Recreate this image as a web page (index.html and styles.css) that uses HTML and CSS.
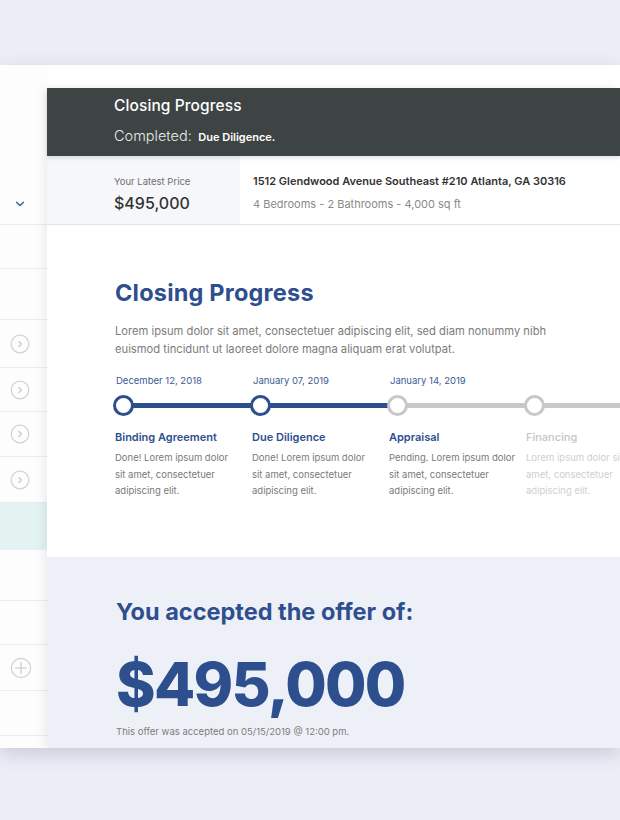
FILE: index.html
```html
<!DOCTYPE html>
<html>
<head>
<meta charset="utf-8">
<link rel="stylesheet" href="styles.css">
</head>
<body>
<div class="page">
  <div class="panel">
    <aside class="sidebar">
      <div class="srow srow-top">
        <svg class="chev" width="10" height="6" viewBox="0 0 10 6"><path d="M1.5 1.2 L5 4.6 L8.5 1.2" fill="none" stroke="#3f5d99" stroke-width="1.4" stroke-linecap="round" stroke-linejoin="round"/></svg>
      </div>
      <div class="srow h44"></div>
      <div class="srow h51"></div>
      <div class="srow h48"><span class="circ"><svg width="20" height="20" viewBox="0 0 20 20"><circle cx="10" cy="10" r="8.8" fill="none" stroke="#d2d2d2" stroke-width="1.2"/><path d="M8.9 7.4 L11.4 10 L8.9 12.6" fill="none" stroke="#c4c4c4" stroke-width="1.2" stroke-linecap="round" stroke-linejoin="round"/></svg></span></div>
      <div class="srow h44"><span class="circ"><svg width="20" height="20" viewBox="0 0 20 20"><circle cx="10" cy="10" r="8.8" fill="none" stroke="#d2d2d2" stroke-width="1.2"/><path d="M8.9 7.4 L11.4 10 L8.9 12.6" fill="none" stroke="#c4c4c4" stroke-width="1.2" stroke-linecap="round" stroke-linejoin="round"/></svg></span></div>
      <div class="srow h45"><span class="circ"><svg width="20" height="20" viewBox="0 0 20 20"><circle cx="10" cy="10" r="8.8" fill="none" stroke="#d2d2d2" stroke-width="1.2"/><path d="M8.9 7.4 L11.4 10 L8.9 12.6" fill="none" stroke="#c4c4c4" stroke-width="1.2" stroke-linecap="round" stroke-linejoin="round"/></svg></span></div>
      <div class="srow h46"><span class="circ"><svg width="20" height="20" viewBox="0 0 20 20"><circle cx="10" cy="10" r="8.8" fill="none" stroke="#d2d2d2" stroke-width="1.2"/><path d="M8.9 7.4 L11.4 10 L8.9 12.6" fill="none" stroke="#c4c4c4" stroke-width="1.2" stroke-linecap="round" stroke-linejoin="round"/></svg></span></div>
      <div class="srow h47 teal"></div>
      <div class="srow h51"></div>
      <div class="srow h44"></div>
      <div class="srow h46"><span class="circ"><svg width="22" height="22" viewBox="0 0 22 22"><circle cx="11" cy="11" r="9.6" fill="none" stroke="#d2d2d2" stroke-width="1.2"/><path d="M11 5.6 V16.4 M5.6 11 H16.4" fill="none" stroke="#c8c8c8" stroke-width="1.2" stroke-linecap="round"/></svg></span></div>
      <div class="srow h45"></div>
      <div class="srow last"></div>
    </aside>

    <main class="main">
      <header class="head">
        <div class="head-title">Closing Progress</div>
        <div class="head-sub"><span class="head-light">Completed:</span> <span class="head-bold">Due Diligence.</span></div>
      </header>

      <section class="price-row">
        <div class="price-box">
          <div class="price-label">Your Latest Price</div>
          <div class="price-value">$495,000</div>
        </div>
        <div class="address">
          <div class="addr-line">1512 Glendwood Avenue Southeast #210 Atlanta, GA 30316</div>
          <div class="addr-sub">4 Bedrooms - 2 Bathrooms - 4,000 sq ft</div>
        </div>
      </section>

      <section class="progress">
        <h1 class="prog-title">Closing Progress</h1>
        <p class="prog-text">Lorem ipsum dolor sit amet, consectetuer adipiscing elit, sed diam nonummy nibh euismod tincidunt ut laoreet dolore magna aliquam erat volutpat.</p>

        <div class="timeline">
          <div class="step done">
            <div class="date">December 12, 2018</div>
            <div class="track"><span class="dot"></span><span class="bar"></span></div>
            <div class="step-title">Binding Agreement</div>
            <div class="step-desc">Done! Lorem ipsum dolor sit amet, consectetuer adipiscing elit.</div>
          </div>
          <div class="step done">
            <div class="date">January 07, 2019</div>
            <div class="track"><span class="dot"></span><span class="bar"></span></div>
            <div class="step-title">Due Diligence</div>
            <div class="step-desc">Done! Lorem ipsum dolor sit amet, consectetuer adipiscing elit.</div>
          </div>
          <div class="step pending">
            <div class="date">January 14, 2019</div>
            <div class="track"><span class="dot"></span><span class="bar"></span></div>
            <div class="step-title">Appraisal</div>
            <div class="step-desc">Pending. Lorem ipsum dolor sit amet, consectetuer adipiscing elit.</div>
          </div>
          <div class="step future">
            <div class="date">&nbsp;</div>
            <div class="track"><span class="dot"></span><span class="bar"></span></div>
            <div class="step-title">Financing</div>
            <div class="step-desc">Lorem ipsum dolor sit<br>amet, consectetuer<br>adipiscing elit.</div>
          </div>
        </div>
      </section>

      <section class="offer">
        <h2 class="offer-title">You accepted the offer of:</h2>
        <div class="offer-amount">$495,000</div>
        <div class="offer-note">This offer was accepted on 05/15/2019 @ 12:00 pm.</div>
      </section>
    </main>
  </div>
</div>
</body>
</html>
```

FILE: styles.css
```css
html, body {
  margin: 0;
  padding: 0;
}
body {
  background: #eceef7;
  font-family: "Inter", "Open Sans", sans-serif;
  width: 620px;
  height: 820px;
  overflow: hidden;
}
.page {
  padding-top: 65px;
}
.panel {
  display: flex;
  height: 683px;
  background: #ffffff;
  box-shadow: 0 6px 18px rgba(40, 45, 70, 0.18);
  overflow: hidden;
}

/* sidebar */
.sidebar {
  width: 47px;
  flex: none;
  display: flex;
  flex-direction: column;
  background: #fdfdfe;
}
.srow {
  border-bottom: 1px solid #ececef;
  display: flex;
  align-items: center;
  justify-content: flex-start;
  padding-left: 10px;
  box-sizing: border-box;
  flex: none;
}
.srow-top {
  height: 160px;
  align-items: flex-end;
  padding-bottom: 17px;
  padding-left: 15px;
}
.chev { display: block; }
.h44 { height: 44px; }
.h45 { height: 45px; }
.h46 { height: 46px; }
.h47 { height: 47px; }
.h48 { height: 48px; }
.h51 { height: 51px; }
.teal { background: #e3f3f2; border-bottom-color: #e3f3f2; }
.last { flex: 1; border-bottom: none; }
.circ { display: block; line-height: 0; }
.circ svg { display: block; }

/* main card */
.main {
  flex: 1;
  margin-top: 23px;
  display: flex;
  flex-direction: column;
  box-shadow: -3px 0 10px rgba(0, 0, 0, 0.07);
  position: relative;
  z-index: 1;
  min-width: 0;
}
.head {
  height: 68px;
  background: #3e4444;
  color: #ffffff;
  padding-left: 67px;
  box-sizing: border-box;
  padding-top: 8px;
  box-shadow: 0 2px 4px rgba(0,0,0,0.12);
  position: relative;
  z-index: 1;
}
.head-title {
  font-size: 15.5px;
  font-weight: 500;
  line-height: 20px;
  letter-spacing: 0.1px;
}
.head-sub {
  margin-top: 8px;
  line-height: 22px;
  white-space: nowrap;
}
.head-light {
  font-size: 14.5px;
  font-weight: 300;
  color: #e8eaea;
}
.head-bold {
  font-size: 11px;
  font-weight: 600;
  margin-left: 2px;
}

.price-row {
  display: flex;
  height: 69px;
  border-bottom: 1px solid #e2e3e7;
  box-sizing: border-box;
  white-space: nowrap;
}
.price-box {
  width: 193px;
  flex: none;
  background: #f6f7fa;
  padding-left: 67px;
  box-sizing: border-box;
  padding-top: 19px;
}
.price-label {
  font-size: 9.5px;
  color: #6f6f6f;
  line-height: 14px;
}
.price-value {
  font-size: 16px;
  font-weight: 500;
  color: #333333;
  line-height: 22px;
  margin-top: 3px;
}
.address {
  padding-left: 13px;
  padding-top: 17px;
}
.addr-line {
  font-size: 11px;
  font-weight: 600;
  color: #333333;
  line-height: 16px;
}
.addr-sub {
  font-size: 11px;
  color: #8a8a8a;
  line-height: 16px;
  margin-top: 7px;
}

/* progress */
.progress {
  height: 332px;
  box-sizing: border-box;
  padding: 53px 0 0 68px;
  background: #ffffff;
}
.prog-title {
  margin: 0;
  font-size: 23.5px;
  font-weight: 700;
  color: #2e4f8e;
  line-height: 30px;
  letter-spacing: 0.2px;
}
.prog-text {
  margin: 14px 0 0 0;
  width: 460px;
  font-size: 11.2px;
  line-height: 18px;
  color: #7b7b7b;
}
.timeline {
  display: flex;
  margin-top: 16px;
  margin-left: -2px;
}
.step {
  width: 137px;
  flex: none;
}
.date {
  font-size: 9.5px;
  color: #3c5a96;
  line-height: 14px;
  padding-left: 3px;
}
.track {
  display: flex;
  align-items: center;
  margin-top: 6px;
  height: 22px;
}
.dot {
  width: 21px;
  height: 21px;
  box-sizing: border-box;
  border: 3px solid #2e4f8e;
  border-radius: 50%;
  background: #ffffff;
  flex: none;
}
.bar {
  flex: 1;
  height: 5px;
  background: #2e4f8e;
  margin: 0 -1px;
}
.pending .dot, .future .dot { border-color: #c8c8c8; }
.pending .bar, .future .bar { background: #c8c8c8; }
.future .bar { margin-right: -40px; }
.step-title {
  margin-top: 13px;
  font-size: 11px;
  font-weight: 600;
  color: #2e4f8e;
  line-height: 16px;
  padding-left: 2px;
}
.step-desc {
  margin-top: 5px;
  font-size: 9.5px;
  line-height: 16.5px;
  color: #7a7a7a;
  width: 126px;
  padding-left: 2px;
}
.future .step-title { color: #c5c5c5; font-weight: 500; }
.future .step-desc { color: #cfcfcf; white-space: nowrap; }

/* offer */
.offer {
  flex: 1;
  background: #eef0f8;
  padding: 40px 0 0 69px;
  box-sizing: border-box;
}
.offer-title {
  margin: 0;
  font-size: 23.5px;
  font-weight: 700;
  color: #2e4f8e;
  line-height: 30px;
}
.offer-amount {
  margin-top: 24px;
  font-size: 60px;
  font-weight: 800;
  color: #2e4f8e;
  line-height: 66px;
  letter-spacing: -1.7px;
}
.offer-note {
  margin-top: 8px;
  font-size: 9.5px;
  color: #7d7d7d;
  line-height: 14px;
}
```
